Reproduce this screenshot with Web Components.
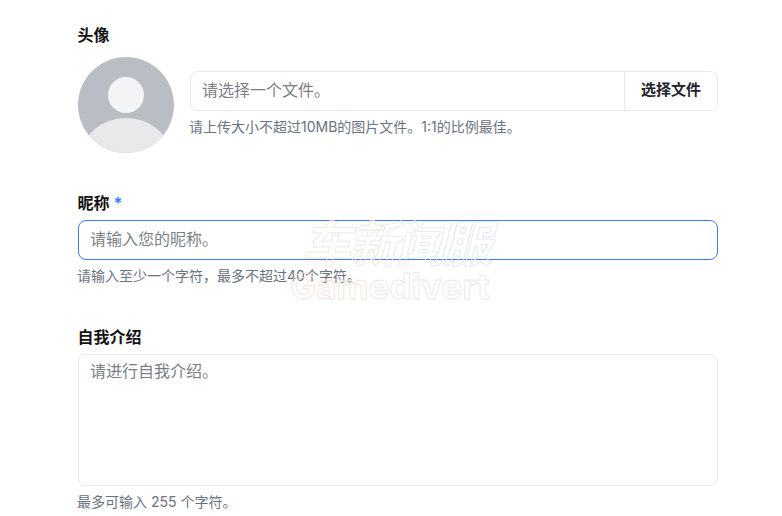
<!DOCTYPE html>
<html lang="zh"><head><meta charset="utf-8">
<style>
html,body{margin:0;background:#fff}
body{font-family:Inter,"Noto Sans CJK SC",sans-serif;overflow:hidden;height:516px}
</style></head><body>
<profile-form>
  <form-field label="头像" style="--label-gap:10px">
    <avatar-upload placeholder="请选择一个文件。" button="选择文件" hint="请上传大小不超过10MB的图片文件。1:1的比例最佳。"></avatar-upload>
  </form-field>
  <form-field label="昵称" required hint="请输入至少一个字符，最多不超过40个字符。" style="--top:38px">
    <text-box focused placeholder="请输入您的昵称。"></text-box>
  </form-field>
  <form-field label="自我介绍" hint="最多可输入 255 个字符。" style="--top:39px">
    <text-box multiline placeholder="请进行自我介绍。"></text-box>
  </form-field>
  <water-mark></water-mark>
</profile-form>
<script>
const def=(n,css,html)=>customElements.define(n,class extends HTMLElement{
  connectedCallback(){const s=this.attachShadow({mode:'open'});s.innerHTML=`<style>${css}</style>`+html(this);}
});
const a=(e,k)=>e.getAttribute(k)||'';
def('profile-form',`:host{display:block;position:relative;width:640px;padding:23px 0 0 78px;height:493px}`,()=>`<slot></slot>`);
def('form-field',`:host{display:block;margin-top:var(--top,0)}
.l{font-size:16px;line-height:24px;font-weight:700;color:#111;display:flex;gap:4px;height:24px;margin-bottom:var(--label-gap,5px);margin-left:-.5px}
.r{color:#3b7cf0;font-weight:700;font-size:16px}
.h{font-size:14px;line-height:20px;color:#6b7280;margin:6px 0 0 -1px}`,
e=>`<div class="l"><span>${a(e,'label')}</span>${e.hasAttribute('required')?'<span class="r">*</span>':''}</div><slot></slot>${a(e,'hint')?`<div class="h">${a(e,'hint')}</div>`:''}`);
def('text-box',`:host{display:block;box-sizing:border-box;height:40px;border:1px solid #e8e9eb;border-radius:8px;padding:0 11px;font-size:16px;line-height:36px;color:#7a7f87;background:#fff}
:host([focused]){border-color:#3b7cf0}
:host([multiline]){height:132px;line-height:32px}`,e=>`<span>${a(e,'placeholder')}</span>`);
def('avatar-upload',`:host{display:flex;gap:16px;align-items:flex-start}
svg{width:96px;height:96px;display:block;flex:none}
.c{flex:1;padding-top:14px}
.b{display:flex;box-sizing:border-box;height:40px;border:1px solid #e8e9eb;border-radius:8px;font-size:16px;line-height:36px}
.p{flex:1;padding:0 11px;color:#7a7f87}
.f{width:93px;box-sizing:border-box;border-left:1px solid #e8e9eb;text-align:center;font-weight:600;font-size:15px;color:#1f2329}
.h{font-size:14px;line-height:20px;color:#6b7280;margin:6px 0 0 -1px}`,
e=>`<svg viewBox="0 0 96 96"><defs><clipPath id="k"><circle cx="48" cy="48" r="48"/></clipPath></defs><g clip-path="url(#k)"><rect width="96" height="96" fill="#b9bec4"/><circle cx="48" cy="38" r="18" fill="#f3f4f6"/><ellipse cx="48" cy="96" rx="43" ry="35" fill="#e8e9eb"/></g></svg>
<div class="c"><div class="b"><div class="p">${a(e,'placeholder')}</div><div class="f">${a(e,'button')}</div></div><div class="h">${a(e,'hint')}</div></div>`);
def('water-mark',`:host{position:absolute;left:290px;top:215px;width:205px;height:90px;pointer-events:none;display:block}
div{position:absolute;white-space:nowrap;color:transparent;-webkit-text-stroke:.8px}
.a{left:12px;top:-6px;font:italic 700 49px/64px "Noto Sans CJK SC",sans-serif;letter-spacing:-2px}
.b{left:0;top:52px;font:700 35px/38px Inter,sans-serif;clip-path:inset(0 0 5px 0)}
.a span:nth-child(1),.b span:nth-child(1){-webkit-text-stroke-color:#f5e2d9}.a span:nth-child(2),.b span:nth-child(2){-webkit-text-stroke-color:#eee6e4}.a span:nth-child(3),.b span:nth-child(3){-webkit-text-stroke-color:#e2e9ef}.a span:nth-child(4){-webkit-text-stroke-color:#dde6ee}`,
()=>`<div class="a"><span>车</span><span>新</span><span>闻</span><span>服</span></div><div class="b"><span>Gam</span><span>ed</span><span>ivert</span></div>`);
</script>
</body></html>
